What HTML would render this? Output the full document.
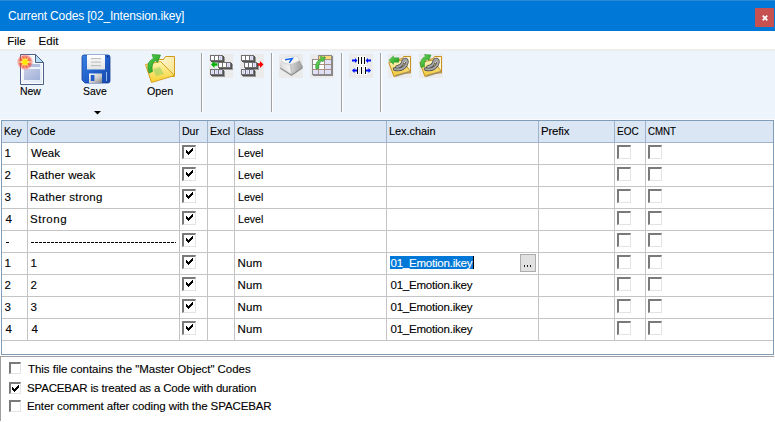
<!DOCTYPE html>
<html><head><meta charset="utf-8"><style>
html,body{margin:0;padding:0;width:775px;height:422px;overflow:hidden;background:#fff}
body{position:relative;font-family:"Liberation Sans",sans-serif}
.t{position:absolute;white-space:pre;line-height:14px;-webkit-text-stroke:0.12px currentColor;font-family:"Liberation Sans",sans-serif}
.cb{position:absolute;width:14px;height:14px;box-sizing:border-box;background:#fff;border-top:2px solid #7a7a7a;border-left:2px solid #7a7a7a;border-right:1px solid #e3e3e3;border-bottom:1px solid #e3e3e3}
.cb2{width:12px;height:12px}
.ic{position:absolute;width:24px;height:24px;background:#ebebeb}
</style></head><body>
<div style="position:absolute;left:0;top:0;width:775px;height:31px;background:#0078d7"></div>
<div style="position:absolute;left:0;top:0;width:775px;height:1px;background:#2a8ad8"></div>
<div style="position:absolute;left:755px;top:8px;width:19px;height:19px;background:#c75050"></div>
<svg style="position:absolute;left:762px;top:15px" width="6" height="6"><path d="M0.7 0.7L5.3 5.3M5.3 0.7L0.7 5.3" stroke="#fff" stroke-width="1.7"/></svg>
<div style="position:absolute;left:0;top:31px;width:775px;height:18px;background:#fff"></div>
<div style="position:absolute;left:0;top:49px;width:775px;height:2px;background:#efedeb"></div>
<div style="position:absolute;left:0;top:51px;width:775px;height:68px;background:#eef4fb"></div>
<div style="position:absolute;left:0;top:119px;width:775px;height:1px;background:#fafafa"></div>
<!-- New -->
<svg style="position:absolute;left:16px;top:51px" width="32" height="36" viewBox="16 51 32 36">
<defs>
<linearGradient id="npg" x1="0" y1="0" x2="1" y2="1"><stop offset="0" stop-color="#ffffff"/><stop offset="1" stop-color="#dfe8f5"/></linearGradient>
<linearGradient id="nwin" x1="0" y1="0" x2="1" y2="1"><stop offset="0" stop-color="#c8cfe6"/><stop offset="1" stop-color="#9fb0d8"/></linearGradient>
<radialGradient id="nglow"><stop offset="0" stop-color="#fff200"/><stop offset="0.28" stop-color="#ffd800"/><stop offset="0.45" stop-color="#ff7020" stop-opacity="0.95"/><stop offset="0.7" stop-color="#f03a30" stop-opacity="0.65"/><stop offset="1" stop-color="#ff8080" stop-opacity="0"/></radialGradient>
</defs>
<path d="M20.5 54.5H35.5L43.5 62.5V84.5H20.5Z" fill="url(#npg)" stroke="#4a5f8a" stroke-width="1"/>
<path d="M21.5 55.5H35V63H42.5V83.5H21.5Z" fill="none" stroke="#ffffff" stroke-width="1"/>
<path d="M35.5 54.5V62.5H43.5Z" fill="#b8def4" stroke="#4a5f8a" stroke-width="1"/>
<rect x="24" y="64" width="16" height="3" fill="#b3bfdc"/>
<rect x="24" y="69" width="16" height="11" fill="url(#nwin)"/>
<circle cx="25" cy="62" r="8.5" fill="url(#nglow)"/>
<path d="M25 54L25.5 60L29.5 56L26.8 60.8L32.5 62L26.8 63.2L29.5 68L25.5 64L25 70L24.5 64L20.5 68L23.2 63.2L17.5 62L23.2 60.8L20.5 56L24.5 60Z" fill="#fff8c0" opacity="0.8"/>
<circle cx="25" cy="62" r="2.6" fill="#ffe800"/>
</svg>
<!-- Save -->
<svg style="position:absolute;left:80px;top:53px" width="32" height="32" viewBox="80 53 32 32">
<defs>
<linearGradient id="fb" x1="0" y1="0" x2="1" y2="1"><stop offset="0" stop-color="#3c80e0"/><stop offset="0.5" stop-color="#2262cc"/><stop offset="1" stop-color="#1646a8"/></linearGradient>
<linearGradient id="fl" x1="0" y1="0" x2="0" y2="1"><stop offset="0" stop-color="#ffffff"/><stop offset="1" stop-color="#e4e4e4"/></linearGradient>
<linearGradient id="fs" x1="0" y1="0" x2="1" y2="1"><stop offset="0" stop-color="#ffffff"/><stop offset="0.6" stop-color="#c8c8c8"/><stop offset="1" stop-color="#808080"/></linearGradient>
</defs>
<path d="M84 55H108A2 2 0 0 1 110 57V81A2 2 0 0 1 108 83H85L82 80V57A2 2 0 0 1 84 55Z" fill="url(#fb)"/>
<path d="M84 55H108A2 2 0 0 1 110 57V81A2 2 0 0 1 108 83H85L82 80V57A2 2 0 0 1 84 55Z" fill="none" stroke="#1840a0" stroke-width="0.8"/>
<rect x="87" y="55" width="18" height="14.5" fill="url(#fl)"/>
<rect x="91" y="58" width="10" height="1.2" fill="#c0c0c0"/>
<rect x="91" y="61.5" width="10" height="1.2" fill="#c0c0c0"/>
<rect x="91" y="65" width="10" height="1.2" fill="#c0c0c0"/>
<rect x="89" y="73.5" width="13" height="9.5" fill="url(#fs)"/>
<rect x="90.8" y="75" width="3.6" height="6" fill="#1f5cc8"/>
<rect x="106" y="72" width="1" height="9" fill="#8fb8f0"/>
<rect x="107" y="56" width="1.2" height="1.2" fill="#102060"/>
</svg>
<!-- Open -->
<svg style="position:absolute;left:142px;top:50px" width="36" height="36" viewBox="142 50 36 36">
<defs>
<linearGradient id="ob" x1="0" y1="0" x2="1" y2="1"><stop offset="0" stop-color="#fffbe0"/><stop offset="1" stop-color="#f8e080"/></linearGradient>
<linearGradient id="of" x1="0" y1="0" x2="0" y2="1"><stop offset="0" stop-color="#fff6b0"/><stop offset="1" stop-color="#f6d030"/></linearGradient>
<linearGradient id="oa" x1="0" y1="0" x2="1" y2="1"><stop offset="0" stop-color="#60d850"/><stop offset="1" stop-color="#108a18"/></linearGradient>
</defs>
<path d="M156.5 59.5H163.5L165.5 56.5H174.5V76.5H156.5Z" fill="url(#ob)" stroke="#d09a20" stroke-width="1"/>
<path d="M145.5 64.5L160.5 61.5L174.5 75.5L151.5 82.5Z" fill="url(#of)" stroke="#d8a020" stroke-width="1"/>
<path d="M153 69L160 67L164 74L156 76Z" fill="#90d060" opacity="0.55"/>
<path d="M149 73C146.5 66 148 61 153.5 58.5L152 54.5L160.5 55L157.5 62.5L156 60.5C152.5 62.5 151.5 66 152.5 71.5Z" fill="url(#oa)" stroke="#1a8a20" stroke-width="0.6"/>
</svg>
<!-- icon 3: key -->
<div class="ic" style="left:279px;top:54px"></div>
<svg style="position:absolute;left:279px;top:54px" width="24" height="24" viewBox="279 54 24 24">
<defs>
<linearGradient id="kt" x1="0" y1="0" x2="1" y2="1"><stop offset="0" stop-color="#ffffff"/><stop offset="1" stop-color="#eeeeee"/></linearGradient>
<linearGradient id="kr" x1="0" y1="0" x2="1" y2="0"><stop offset="0" stop-color="#d4d4d4"/><stop offset="1" stop-color="#9c9c9c"/></linearGradient>
<linearGradient id="kl" x1="0" y1="0" x2="1" y2="0"><stop offset="0" stop-color="#dcdcdc"/><stop offset="1" stop-color="#f4f4f4"/></linearGradient>
</defs>
<path d="M279.8 67L291.5 74.5L303 66L302.5 68.5L291.5 76L280.5 69Z" fill="#7c7c7c" opacity="0.85"/>
<path d="M281.5 61.5Q285 63.5 290.5 64.5L291.5 74L280 67Z" fill="url(#kl)" stroke="#c0c0c0" stroke-width="0.5"/>
<path d="M290.5 64.5Q296 62.5 299.5 60.5L302.5 66.5L291.5 74Z" fill="url(#kr)" stroke="#a0a0a0" stroke-width="0.5"/>
<path d="M281.5 59Q288 55.5 297.5 56.5L299.5 60.5Q296 62.5 290.5 64.5Q285 63.5 281.5 61.5Z" fill="url(#kt)" stroke="#c8c8c8" stroke-width="0.5"/>
<path d="M285 59.8L292.3 58.6L289.3 62.8" fill="none" stroke="#1464e6" stroke-width="1.5"/>
</svg>
<!-- icon 4: table -->
<div class="ic" style="left:310px;top:54px"></div>
<svg style="position:absolute;left:310px;top:54px" width="24" height="24" viewBox="310 54 24 24">
<rect x="313" y="60" width="20" height="16" fill="#707070" opacity="0.8"/>
<rect x="319" y="56" width="14" height="4" fill="#707070" opacity="0.8"/>
<rect x="312" y="59" width="20" height="16" fill="#8a8a8a"/>
<rect x="318" y="55" width="14" height="5" fill="#8a8a8a"/>
<rect x="319" y="56" width="5" height="3" fill="#ffd878"/><rect x="325" y="56" width="6" height="3" fill="#ffd878"/>
<g fill="#a89080"><rect x="313" y="59" width="18" height="1"/><rect x="313" y="64" width="18" height="1"/><rect x="313" y="69" width="18" height="1"/><rect x="318" y="60" width="1" height="14"/><rect x="324" y="55" width="1" height="19"/></g>
<rect x="313" y="60" width="5" height="4" fill="#fff"/><rect x="319" y="60" width="5" height="4" fill="#fff"/><rect x="325" y="60" width="6" height="4" fill="#e0e0f8"/>
<rect x="313" y="65" width="5" height="4" fill="#fff"/><rect x="319" y="65" width="5" height="4" fill="#fff"/><rect x="325" y="65" width="6" height="4" fill="#e0e0f8"/>
<rect x="313" y="70" width="5" height="4" fill="#e0e0f8"/><rect x="319" y="70" width="5" height="4" fill="#e0e0f8"/><rect x="325" y="70" width="6" height="4" fill="#e0e0f8"/>
<path d="M316 69C314.8 64 316.8 60.5 321 59.2L320.2 56.5L325.5 57.5L322.8 62L322 60.8C319.5 62 318.5 65 318.8 68.5Z" fill="url(#ga2)" stroke="#1a8a20" stroke-width="0.5"/><defs><linearGradient id="ga2" x1="0" y1="0" x2="1" y2="1"><stop offset="0" stop-color="#80e070"/><stop offset="1" stop-color="#20a020"/></linearGradient></defs>
</svg>
<!-- icon 5: align -->
<div class="ic" style="left:349px;top:54px"></div>
<svg style="position:absolute;left:349px;top:54px" width="24" height="24" viewBox="349 54 24 24">
<g fill="#fff" opacity="0.9"><rect x="357" y="56" width="3" height="9"/><rect x="360" y="56" width="3" height="9"/><rect x="363" y="56" width="3" height="9"/><rect x="356" y="66" width="3" height="9"/><rect x="360" y="66" width="3" height="9"/><rect x="364" y="66" width="3" height="9"/></g>
<g fill="#000"><rect x="358" y="57" width="1" height="7"/><rect x="361" y="57" width="1" height="7"/><rect x="364" y="57" width="1" height="7"/>
<rect x="357" y="67" width="1" height="7"/><rect x="361" y="67" width="1" height="7"/><rect x="365" y="67" width="1" height="7"/></g>
<g fill="#0010ff">
<path d="M352 59.5H355V58L357.5 60.5L355 63V61.5H352Z"/>
<path d="M371 59.5H368V58L365.5 60.5L368 63V61.5H371Z"/>
<path d="M357 69.5H354.5V68L352 70.5L354.5 73V71.5H357Z"/>
<path d="M366 69.5H368.5V68L371 70.5L368.5 73V71.5H366Z"/>
</g>
</svg>
<!-- icon 6/7: folders -->
<svg style="position:absolute;left:386px;top:52px" width="60" height="28" viewBox="386 52 60 28">
<defs>
<linearGradient id="yf" x1="0" y1="0" x2="0" y2="1"><stop offset="0" stop-color="#fff8c8"/><stop offset="1" stop-color="#f2c428"/></linearGradient>
<linearGradient id="ga" x1="0" y1="0" x2="1" y2="1"><stop offset="0" stop-color="#78e060"/><stop offset="1" stop-color="#109018"/></linearGradient>
<g id="fold">
<rect x="0" y="0" width="24" height="24" fill="#ebebeb"/>
<path d="M10.5 5.5L14.5 4.5L15.5 2.5H22.5V19H10.5Z" fill="#fff8d8" stroke="#c89020" stroke-width="1"/>
<path d="M0.8 8.5L14 6L22.5 17.5L6 22.5Z" fill="url(#yf)" stroke="#c89020" stroke-width="1"/>
<path d="M7 21L22.8 16.5L22.5 18.5L7.5 23Z" fill="#808080" opacity="0.5"/>
<path d="M6.5 15Q14 17 18 11Q20 7 18 5.5Q15.5 5 14.5 9Q13.5 12 9 13" fill="none" stroke="#505050" stroke-width="3.4" stroke-linecap="round"/>
<path d="M6.5 15Q14 17 18 11Q20 7 18 5.5Q15.5 5 14.5 9Q13.5 12 9 13" fill="none" stroke="#a8a8a8" stroke-width="1.8" stroke-linecap="round"/>
<path d="M16 9Q17 6.5 18 7" fill="none" stroke="#ffffff" stroke-width="0.8"/>
</g>
</defs>
<use href="#fold" x="388" y="54"/>
<use href="#fold" x="419" y="54"/>
<path d="M388.8 60.3L393.5 55.8V57.8H398.8V62.2H393.5V64.5Z" fill="url(#ga)" stroke="#1a8a20" stroke-width="0.4"/>
<path d="M421 67.5C419.5 62 421.5 58 425.5 56.5L424.5 54.5L431 55L428.5 60.5L427.5 59C425 60.5 424 63 424.5 66.5Z" fill="url(#ga)" stroke="#1a8a20" stroke-width="0.5"/>
</svg>

<div class="ic" style="left:209px;top:54px"></div><svg style="position:absolute;left:209px;top:54px" width="24" height="24" viewBox="209 54 24 24"><rect x="212" y="57" width="13" height="6" fill="#9a9a9a" /><rect x="211" y="56" width="13" height="6" fill="#505050" /><rect x="210" y="55" width="13" height="6" fill="#707070" /><rect x="211" y="56" width="3" height="4" fill="#ffffff" /><rect x="215" y="56" width="3" height="4" fill="#ffffff" /><rect x="219" y="56" width="3" height="4" fill="#e6e6fb" /><rect x="220" y="56" width="1" height="4" fill="#cdcdf0" /><rect x="220" y="64" width="13" height="6" fill="#9a9a9a" /><rect x="219" y="63" width="13" height="6" fill="#505050" /><rect x="218" y="62" width="13" height="6" fill="#707070" /><rect x="219" y="63" width="3" height="4" fill="#ffffff" /><rect x="223" y="63" width="3" height="4" fill="#ffffff" /><rect x="227" y="63" width="3" height="4" fill="#e6e6fb" /><rect x="228" y="63" width="1" height="4" fill="#cdcdf0" /><rect x="212" y="71" width="13" height="6" fill="#9a9a9a" /><rect x="211" y="70" width="13" height="6" fill="#505050" /><rect x="210" y="69" width="13" height="6" fill="#707070" /><rect x="211" y="70" width="3" height="4" fill="#e6e6fb" /><rect x="212" y="70" width="1" height="4" fill="#cdcdf0" /><rect x="215" y="70" width="3" height="4" fill="#e6e6fb" /><rect x="216" y="70" width="1" height="4" fill="#cdcdf0" /><rect x="219" y="70" width="3" height="4" fill="#e6e6fb" /><rect x="220" y="70" width="1" height="4" fill="#cdcdf0" /><path d="M211 64.5L214.5 61V63.3H217.5V65.7H214.5V68Z" fill="#00b400"/></svg>
<div class="ic" style="left:240px;top:54px"></div><svg style="position:absolute;left:240px;top:54px" width="24" height="24" viewBox="240 54 24 24"><rect x="243" y="57" width="13" height="6" fill="#9a9a9a" /><rect x="242" y="56" width="13" height="6" fill="#505050" /><rect x="241" y="55" width="13" height="6" fill="#707070" /><rect x="242" y="56" width="3" height="4" fill="#ffffff" /><rect x="246" y="56" width="3" height="4" fill="#ffffff" /><rect x="250" y="56" width="3" height="4" fill="#e6e6fb" /><rect x="251" y="56" width="1" height="4" fill="#cdcdf0" /><rect x="246" y="64" width="13" height="6" fill="#9a9a9a" /><rect x="245" y="63" width="13" height="6" fill="#505050" /><rect x="244" y="62" width="13" height="6" fill="#707070" /><rect x="245" y="63" width="3" height="4" fill="#ffffff" /><rect x="249" y="63" width="3" height="4" fill="#ffffff" /><rect x="253" y="63" width="3" height="4" fill="#e6e6fb" /><rect x="254" y="63" width="1" height="4" fill="#cdcdf0" /><rect x="243" y="71" width="13" height="6" fill="#9a9a9a" /><rect x="242" y="70" width="13" height="6" fill="#505050" /><rect x="241" y="69" width="13" height="6" fill="#707070" /><rect x="242" y="70" width="3" height="4" fill="#e6e6fb" /><rect x="243" y="70" width="1" height="4" fill="#cdcdf0" /><rect x="246" y="70" width="3" height="4" fill="#e6e6fb" /><rect x="247" y="70" width="1" height="4" fill="#cdcdf0" /><rect x="250" y="70" width="3" height="4" fill="#e6e6fb" /><rect x="251" y="70" width="1" height="4" fill="#cdcdf0" /><path d="M263.5 64.5L260 61V63.3H258V65.7H260V68Z" fill="#ff0000"/></svg>
<div style="position:absolute;left:201px;top:53px;width:1px;height:59px;background:#a0a0a0"></div><div style="position:absolute;left:202px;top:53px;width:1px;height:59px;background:#ffffff"></div>
<div style="position:absolute;left:271px;top:53px;width:1px;height:59px;background:#a0a0a0"></div><div style="position:absolute;left:272px;top:53px;width:1px;height:59px;background:#ffffff"></div>
<div style="position:absolute;left:341px;top:53px;width:1px;height:59px;background:#a0a0a0"></div><div style="position:absolute;left:342px;top:53px;width:1px;height:59px;background:#ffffff"></div>
<div style="position:absolute;left:380px;top:53px;width:1px;height:59px;background:#a0a0a0"></div><div style="position:absolute;left:381px;top:53px;width:1px;height:59px;background:#ffffff"></div>
<svg style="position:absolute;left:94px;top:111px" width="7" height="4"><path d="M0 0H7L3.5 3.5Z" fill="#000"/></svg>
<div style="position:absolute;left:1px;top:120px;width:773px;height:235px;box-sizing:border-box;border:1px solid #7f9db9;background:#fff"></div>
<div style="position:absolute;left:2px;top:121px;width:771px;height:21px;background:#dbe6f4"></div>
<div style="position:absolute;left:2px;top:142px;width:771px;height:1px;background:#9fb3cc"></div>
<div style="position:absolute;left:27px;top:121px;width:1px;height:21px;background:#9fb3cc"></div>
<div style="position:absolute;left:179px;top:121px;width:1px;height:21px;background:#9fb3cc"></div>
<div style="position:absolute;left:207px;top:121px;width:1px;height:21px;background:#9fb3cc"></div>
<div style="position:absolute;left:234px;top:121px;width:1px;height:21px;background:#9fb3cc"></div>
<div style="position:absolute;left:386px;top:121px;width:1px;height:21px;background:#9fb3cc"></div>
<div style="position:absolute;left:538px;top:121px;width:1px;height:21px;background:#9fb3cc"></div>
<div style="position:absolute;left:614px;top:121px;width:1px;height:21px;background:#9fb3cc"></div>
<div style="position:absolute;left:645px;top:121px;width:1px;height:21px;background:#9fb3cc"></div>
<div style="position:absolute;left:2px;top:164px;width:771px;height:1px;background:#c4c4c4"></div>
<div style="position:absolute;left:2px;top:186px;width:771px;height:1px;background:#c4c4c4"></div>
<div style="position:absolute;left:2px;top:208px;width:771px;height:1px;background:#c4c4c4"></div>
<div style="position:absolute;left:2px;top:230px;width:771px;height:1px;background:#c4c4c4"></div>
<div style="position:absolute;left:2px;top:252px;width:771px;height:1px;background:#c4c4c4"></div>
<div style="position:absolute;left:2px;top:274px;width:771px;height:1px;background:#c4c4c4"></div>
<div style="position:absolute;left:2px;top:296px;width:771px;height:1px;background:#c4c4c4"></div>
<div style="position:absolute;left:2px;top:318px;width:771px;height:1px;background:#c4c4c4"></div>
<div style="position:absolute;left:2px;top:340px;width:771px;height:1px;background:#c4c4c4"></div>
<div style="position:absolute;left:27px;top:143px;width:1px;height:197px;background:#c4c4c4"></div>
<div style="position:absolute;left:179px;top:143px;width:1px;height:197px;background:#c4c4c4"></div>
<div style="position:absolute;left:207px;top:143px;width:1px;height:197px;background:#c4c4c4"></div>
<div style="position:absolute;left:234px;top:143px;width:1px;height:197px;background:#c4c4c4"></div>
<div style="position:absolute;left:386px;top:143px;width:1px;height:197px;background:#c4c4c4"></div>
<div style="position:absolute;left:538px;top:143px;width:1px;height:197px;background:#c4c4c4"></div>
<div style="position:absolute;left:614px;top:143px;width:1px;height:197px;background:#c4c4c4"></div>
<div style="position:absolute;left:645px;top:143px;width:1px;height:197px;background:#c4c4c4"></div>
<div style="position:absolute;left:6px;top:242px;width:3px;height:1px;background:#000"></div>
<div style="position:absolute;left:31px;top:242px;width:145px;height:1px;background:repeating-linear-gradient(90deg,#000 0 3px,transparent 3px 4px)"></div>
<div style="position:absolute;left:390px;top:256px;width:83px;height:13px;background:#0078d7"></div>
<div style="position:absolute;left:473px;top:256px;width:1px;height:13px;background:#000"></div>
<div style="position:absolute;left:520px;top:254px;width:16px;height:18px;box-sizing:border-box;border:1px solid #adadad;background:#e1e1e1"></div>
<div style="position:absolute;left:524px;top:265px;width:1px;height:2px;background:#202020"></div>
<div style="position:absolute;left:527px;top:265px;width:1px;height:2px;background:#202020"></div>
<div style="position:absolute;left:530px;top:265px;width:1px;height:2px;background:#202020"></div>
<div class="cb" style="left:182px;top:145px"></div><svg style="position:absolute;left:186px;top:148px" width="7" height="7" fill="#000"><rect x="6" y="0" width="1" height="1"/><rect x="5" y="1" width="2" height="1"/><rect x="0" y="2" width="1" height="1"/><rect x="4" y="2" width="3" height="1"/><rect x="0" y="3" width="2" height="1"/><rect x="3" y="3" width="3" height="1"/><rect x="0" y="4" width="5" height="1"/><rect x="1" y="5" width="3" height="1"/><rect x="2" y="6" width="1" height="1"/></svg>
<div class="cb" style="left:617px;top:145px"></div>
<div class="cb" style="left:648px;top:145px"></div>
<div class="cb" style="left:182px;top:167px"></div><svg style="position:absolute;left:186px;top:170px" width="7" height="7" fill="#000"><rect x="6" y="0" width="1" height="1"/><rect x="5" y="1" width="2" height="1"/><rect x="0" y="2" width="1" height="1"/><rect x="4" y="2" width="3" height="1"/><rect x="0" y="3" width="2" height="1"/><rect x="3" y="3" width="3" height="1"/><rect x="0" y="4" width="5" height="1"/><rect x="1" y="5" width="3" height="1"/><rect x="2" y="6" width="1" height="1"/></svg>
<div class="cb" style="left:617px;top:167px"></div>
<div class="cb" style="left:648px;top:167px"></div>
<div class="cb" style="left:182px;top:189px"></div><svg style="position:absolute;left:186px;top:192px" width="7" height="7" fill="#000"><rect x="6" y="0" width="1" height="1"/><rect x="5" y="1" width="2" height="1"/><rect x="0" y="2" width="1" height="1"/><rect x="4" y="2" width="3" height="1"/><rect x="0" y="3" width="2" height="1"/><rect x="3" y="3" width="3" height="1"/><rect x="0" y="4" width="5" height="1"/><rect x="1" y="5" width="3" height="1"/><rect x="2" y="6" width="1" height="1"/></svg>
<div class="cb" style="left:617px;top:189px"></div>
<div class="cb" style="left:648px;top:189px"></div>
<div class="cb" style="left:182px;top:211px"></div><svg style="position:absolute;left:186px;top:214px" width="7" height="7" fill="#000"><rect x="6" y="0" width="1" height="1"/><rect x="5" y="1" width="2" height="1"/><rect x="0" y="2" width="1" height="1"/><rect x="4" y="2" width="3" height="1"/><rect x="0" y="3" width="2" height="1"/><rect x="3" y="3" width="3" height="1"/><rect x="0" y="4" width="5" height="1"/><rect x="1" y="5" width="3" height="1"/><rect x="2" y="6" width="1" height="1"/></svg>
<div class="cb" style="left:617px;top:211px"></div>
<div class="cb" style="left:648px;top:211px"></div>
<div class="cb" style="left:182px;top:233px"></div><svg style="position:absolute;left:186px;top:236px" width="7" height="7" fill="#000"><rect x="6" y="0" width="1" height="1"/><rect x="5" y="1" width="2" height="1"/><rect x="0" y="2" width="1" height="1"/><rect x="4" y="2" width="3" height="1"/><rect x="0" y="3" width="2" height="1"/><rect x="3" y="3" width="3" height="1"/><rect x="0" y="4" width="5" height="1"/><rect x="1" y="5" width="3" height="1"/><rect x="2" y="6" width="1" height="1"/></svg>
<div class="cb" style="left:617px;top:233px"></div>
<div class="cb" style="left:648px;top:233px"></div>
<div class="cb" style="left:182px;top:255px"></div><svg style="position:absolute;left:186px;top:258px" width="7" height="7" fill="#000"><rect x="6" y="0" width="1" height="1"/><rect x="5" y="1" width="2" height="1"/><rect x="0" y="2" width="1" height="1"/><rect x="4" y="2" width="3" height="1"/><rect x="0" y="3" width="2" height="1"/><rect x="3" y="3" width="3" height="1"/><rect x="0" y="4" width="5" height="1"/><rect x="1" y="5" width="3" height="1"/><rect x="2" y="6" width="1" height="1"/></svg>
<div class="cb" style="left:617px;top:255px"></div>
<div class="cb" style="left:648px;top:255px"></div>
<div class="cb" style="left:182px;top:277px"></div><svg style="position:absolute;left:186px;top:280px" width="7" height="7" fill="#000"><rect x="6" y="0" width="1" height="1"/><rect x="5" y="1" width="2" height="1"/><rect x="0" y="2" width="1" height="1"/><rect x="4" y="2" width="3" height="1"/><rect x="0" y="3" width="2" height="1"/><rect x="3" y="3" width="3" height="1"/><rect x="0" y="4" width="5" height="1"/><rect x="1" y="5" width="3" height="1"/><rect x="2" y="6" width="1" height="1"/></svg>
<div class="cb" style="left:617px;top:277px"></div>
<div class="cb" style="left:648px;top:277px"></div>
<div class="cb" style="left:182px;top:299px"></div><svg style="position:absolute;left:186px;top:302px" width="7" height="7" fill="#000"><rect x="6" y="0" width="1" height="1"/><rect x="5" y="1" width="2" height="1"/><rect x="0" y="2" width="1" height="1"/><rect x="4" y="2" width="3" height="1"/><rect x="0" y="3" width="2" height="1"/><rect x="3" y="3" width="3" height="1"/><rect x="0" y="4" width="5" height="1"/><rect x="1" y="5" width="3" height="1"/><rect x="2" y="6" width="1" height="1"/></svg>
<div class="cb" style="left:617px;top:299px"></div>
<div class="cb" style="left:648px;top:299px"></div>
<div class="cb" style="left:182px;top:321px"></div><svg style="position:absolute;left:186px;top:324px" width="7" height="7" fill="#000"><rect x="6" y="0" width="1" height="1"/><rect x="5" y="1" width="2" height="1"/><rect x="0" y="2" width="1" height="1"/><rect x="4" y="2" width="3" height="1"/><rect x="0" y="3" width="2" height="1"/><rect x="3" y="3" width="3" height="1"/><rect x="0" y="4" width="5" height="1"/><rect x="1" y="5" width="3" height="1"/><rect x="2" y="6" width="1" height="1"/></svg>
<div class="cb" style="left:617px;top:321px"></div>
<div class="cb" style="left:648px;top:321px"></div>
<div style="position:absolute;left:0px;top:356px;width:774px;height:1px;background:#a0a0a0"></div>
<div style="position:absolute;left:0px;top:356px;width:1px;height:65px;background:#a0a0a0"></div>
<div class="cb cb2" style="left:9px;top:362px"></div>
<div class="cb cb2" style="left:9px;top:382px"></div>
<svg style="position:absolute;left:12px;top:385px" width="7" height="7" fill="#000"><rect x="6" y="0" width="1" height="1"/><rect x="5" y="1" width="2" height="1"/><rect x="0" y="2" width="1" height="1"/><rect x="4" y="2" width="3" height="1"/><rect x="0" y="3" width="2" height="1"/><rect x="3" y="3" width="3" height="1"/><rect x="0" y="4" width="5" height="1"/><rect x="1" y="5" width="3" height="1"/><rect x="2" y="6" width="1" height="1"/></svg>
<div class="cb cb2" style="left:9px;top:400px"></div>
<div class="t" style="left:8.00px;top:9px;font-size:12px;letter-spacing:-0.156px;color:#fff;-webkit-text-stroke:0;">Current Codes [02_Intension.ikey]</div>
<div class="t" style="left:7.20px;top:34px;font-size:11.5px;letter-spacing:0.000px;color:#000;">File</div>
<div class="t" style="left:38.40px;top:34px;font-size:11.5px;letter-spacing:0.100px;color:#000;">Edit</div>
<div class="t" style="left:20.09px;top:84px;font-size:11.5px;letter-spacing:0.000px;color:#000;transform:scaleX(0.9091);transform-origin:0 0;">New</div>
<div class="t" style="left:83.10px;top:84px;font-size:11.5px;letter-spacing:0.000px;color:#000;transform:scaleX(0.9040);transform-origin:0 0;">Save</div>
<div class="t" style="left:146.50px;top:84px;font-size:11.5px;letter-spacing:0.000px;color:#000;transform:scaleX(0.9286);transform-origin:0 0;">Open</div>
<div class="t" style="left:4.11px;top:124px;font-size:11.5px;letter-spacing:0.000px;color:#000;transform:scaleX(0.8947);transform-origin:0 0;">Key</div>
<div class="t" style="left:30.08px;top:124px;font-size:11.5px;letter-spacing:0.000px;color:#000;transform:scaleX(0.9231);transform-origin:0 0;">Code</div>
<div class="t" style="left:182.08px;top:124px;font-size:11.5px;letter-spacing:0.000px;color:#000;transform:scaleX(0.9176);transform-origin:0 0;">Dur</div>
<div class="t" style="left:209.57px;top:124px;font-size:11.5px;letter-spacing:0.000px;color:#000;transform:scaleX(0.9250);transform-origin:0 0;">Excl</div>
<div class="t" style="left:236.68px;top:124px;font-size:11.5px;letter-spacing:0.000px;color:#000;transform:scaleX(0.9222);transform-origin:0 0;">Class</div>
<div class="t" style="left:388.65px;top:124px;font-size:11.5px;letter-spacing:0.000px;color:#000;transform:scaleX(0.9458);transform-origin:0 0;">Lex.chain</div>
<div class="t" style="left:541.00px;top:124px;font-size:11.5px;letter-spacing:-0.200px;color:#000;">Prefix</div>
<div class="t" style="left:617.13px;top:124px;font-size:11.5px;letter-spacing:0.000px;color:#000;transform:scaleX(0.8696);transform-origin:0 0;">EOC</div>
<div class="t" style="left:648.16px;top:124px;font-size:11.5px;letter-spacing:0.000px;color:#000;transform:scaleX(0.8438);transform-origin:0 0;">CMNT</div>
<div class="t" style="left:4.50px;top:146px;font-size:11.5px;letter-spacing:0.000px;color:#000;">1</div>
<div class="t" style="left:31.00px;top:146px;font-size:11.5px;letter-spacing:-0.100px;color:#000;">Weak</div>
<div class="t" style="left:237.58px;top:146px;font-size:11.5px;letter-spacing:0.000px;color:#000;transform:scaleX(0.9192);transform-origin:0 0;">Level</div>
<div class="t" style="left:4.50px;top:168px;font-size:11.5px;letter-spacing:0.000px;color:#000;">2</div>
<div class="t" style="left:30.00px;top:168px;font-size:11.5px;letter-spacing:0.060px;color:#000;">Rather weak</div>
<div class="t" style="left:237.58px;top:168px;font-size:11.5px;letter-spacing:0.000px;color:#000;transform:scaleX(0.9192);transform-origin:0 0;">Level</div>
<div class="t" style="left:4.50px;top:190px;font-size:11.5px;letter-spacing:0.000px;color:#000;">3</div>
<div class="t" style="left:30.00px;top:190px;font-size:11.5px;letter-spacing:0.225px;color:#000;">Rather strong</div>
<div class="t" style="left:237.58px;top:190px;font-size:11.5px;letter-spacing:0.000px;color:#000;transform:scaleX(0.9192);transform-origin:0 0;">Level</div>
<div class="t" style="left:5.50px;top:212px;font-size:11.5px;letter-spacing:0.000px;color:#000;">4</div>
<div class="t" style="left:30.00px;top:212px;font-size:11.5px;letter-spacing:0.540px;color:#000;">Strong</div>
<div class="t" style="left:237.58px;top:212px;font-size:11.5px;letter-spacing:0.000px;color:#000;transform:scaleX(0.9192);transform-origin:0 0;">Level</div>
<div class="t" style="left:4.50px;top:256px;font-size:11.5px;letter-spacing:0.000px;color:#000;">1</div>
<div class="t" style="left:30.50px;top:256px;font-size:11.5px;letter-spacing:0.000px;color:#000;">1</div>
<div class="t" style="left:237.50px;top:256px;font-size:11.5px;letter-spacing:0.100px;color:#000;">Num</div>
<div class="t" style="left:390.50px;top:256px;font-size:11.5px;letter-spacing:-0.214px;color:#fff;">01_Emotion.ikey</div>
<div class="t" style="left:4.50px;top:278px;font-size:11.5px;letter-spacing:0.000px;color:#000;">2</div>
<div class="t" style="left:30.50px;top:278px;font-size:11.5px;letter-spacing:0.000px;color:#000;">2</div>
<div class="t" style="left:237.50px;top:278px;font-size:11.5px;letter-spacing:0.100px;color:#000;">Num</div>
<div class="t" style="left:390.50px;top:278px;font-size:11.5px;letter-spacing:-0.214px;color:#000;">01_Emotion.ikey</div>
<div class="t" style="left:4.50px;top:300px;font-size:11.5px;letter-spacing:0.000px;color:#000;">3</div>
<div class="t" style="left:30.50px;top:300px;font-size:11.5px;letter-spacing:0.000px;color:#000;">3</div>
<div class="t" style="left:237.50px;top:300px;font-size:11.5px;letter-spacing:0.100px;color:#000;">Num</div>
<div class="t" style="left:390.50px;top:300px;font-size:11.5px;letter-spacing:-0.214px;color:#000;">01_Emotion.ikey</div>
<div class="t" style="left:5.50px;top:322px;font-size:11.5px;letter-spacing:0.000px;color:#000;">4</div>
<div class="t" style="left:31.50px;top:322px;font-size:11.5px;letter-spacing:0.000px;color:#000;">4</div>
<div class="t" style="left:237.50px;top:322px;font-size:11.5px;letter-spacing:0.100px;color:#000;">Num</div>
<div class="t" style="left:390.50px;top:322px;font-size:11.5px;letter-spacing:-0.214px;color:#000;">01_Emotion.ikey</div>
<div class="t" style="left:28.00px;top:362px;font-size:11.5px;letter-spacing:-0.035px;color:#000;">This file contains the &quot;Master Object&quot; Codes</div>
<div class="t" style="left:27.00px;top:381px;font-size:11.5px;letter-spacing:-0.167px;color:#000;">SPACEBAR is treated as a Code with duration</div>
<div class="t" style="left:27.00px;top:399px;font-size:11.5px;letter-spacing:-0.102px;color:#000;">Enter comment after coding with the SPACEBAR</div>
</body></html>
